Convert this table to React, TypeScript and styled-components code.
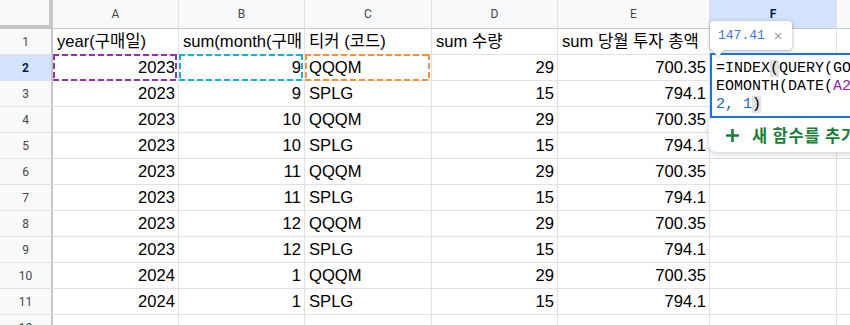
import * as React from 'react';
import styled, { createGlobalStyle } from 'styled-components';

const GlobalStyle = createGlobalStyle`
  html, body {
    margin: 0;
    padding: 0;
    background: #fff;
    overflow: hidden;
  }
`;

// sheet geometry (row header + A..G), G runs off the right edge
const COLS = ['A', 'B', 'C', 'D', 'E', 'F', 'G'];
const COL_WIDTHS = '53px 126px 126px 127px 126px 152px 127px 126px';

const GRID_LINE = '#e1e1e1';
const HEAD_LINE = '#c4c7c5';
const SELECT_BG = '#d3e3fd';

type Row = [string, string, string, string, string];

const header: Row = ['year(구매일)', 'sum(month(구매일))', '티커 (코드)', 'sum 수량', 'sum 당월 투자 총액'];

const rows: Row[] = [
  ['2023', '9', 'QQQM', '29', '700.35'],
  ['2023', '9', 'SPLG', '15', '794.1'],
  ['2023', '10', 'QQQM', '29', '700.35'],
  ['2023', '10', 'SPLG', '15', '794.1'],
  ['2023', '11', 'QQQM', '29', '700.35'],
  ['2023', '11', 'SPLG', '15', '794.1'],
  ['2023', '12', 'QQQM', '29', '700.35'],
  ['2023', '12', 'SPLG', '15', '794.1'],
  ['2024', '1', 'QQQM', '29', '700.35'],
  ['2024', '1', 'SPLG', '15', '794.1'],
];

// colours of the ranges referenced by the formula in F2
const rangeColors: Record<number, string> = {
  0: '#9334a6',
  1: '#12b5cb',
  2: '#fa903e',
};

const Sheet = styled.div`
  position: relative;
  width: 850px;
  height: 325px;
  overflow: hidden;
`;

const Grid = styled.div`
  display: grid;
  width: max-content;
  grid-template-columns: ${COL_WIDTHS};
  grid-template-rows: 29px repeat(12, 26px);
  font-family: 'Liberation Sans', 'Noto Sans CJK KR', Arial, sans-serif;
`;

const Corner = styled.div`
  background: #f8f9fa;
  border-right: 4px solid #c7c7c7;
  border-bottom: 4px solid #c7c7c7;
  box-sizing: border-box;
`;

const ColHeader = styled.div<{ $active?: boolean }>`
  display: flex;
  align-items: center;
  justify-content: center;
  box-sizing: border-box;
  background: ${(p) => (p.$active ? SELECT_BG : '#f8f9fa')};
  border-right: 1px solid ${GRID_LINE};
  border-bottom: 1px solid ${HEAD_LINE};
  font-family: Roboto, 'Liberation Sans', sans-serif;
  font-size: 12px;
  font-weight: ${(p) => (p.$active ? 700 : 400)};
  color: ${(p) => (p.$active ? '#041e49' : '#444746')};
  padding-bottom: 1px;
`;

const RowHeader = styled.div<{ $active?: boolean }>`
  display: flex;
  align-items: center;
  justify-content: center;
  box-sizing: border-box;
  background: ${(p) => (p.$active ? SELECT_BG : '#f8f9fa')};
  border-right: 2px solid ${HEAD_LINE};
  border-bottom: 1px solid ${GRID_LINE};
  font-family: Roboto, 'Liberation Sans', sans-serif;
  font-size: 12px;
  font-weight: ${(p) => (p.$active ? 700 : 400)};
  color: ${(p) => (p.$active ? '#041e49' : '#444746')};
  padding-top: 1px;
`;

const dashes = (c: string, dir: string) =>
  `repeating-linear-gradient(${dir}, ${c} 0 6px, transparent 6px 9px)`;

const Cell = styled.div<{ $align?: 'left' | 'right'; $range?: string }>`
  position: relative;
  display: flex;
  align-items: flex-end;
  justify-content: ${(p) => (p.$align === 'right' ? 'flex-end' : 'flex-start')};
  box-sizing: border-box;
  padding: 0 3px 2px 4px;
  border-right: 1px solid ${GRID_LINE};
  border-bottom: 1px solid ${GRID_LINE};
  font-size: 16.6px;
  line-height: 21px;
  color: #000;
  white-space: nowrap;
  overflow: ${(p) => (p.$range ? 'visible' : 'hidden')};

  ${(p) =>
    p.$range &&
    `
    &::after {
      content: '';
      position: absolute;
      top: -1px;
      bottom: -1px;
      left: 0;
      right: 1px;
      pointer-events: none;
      background:
        ${dashes(p.$range, '90deg')} top left / 100% 2px no-repeat,
        ${dashes(p.$range, '90deg')} bottom left / 100% 2px no-repeat,
        ${dashes(p.$range, '180deg')} top left / 2px 100% no-repeat,
        ${dashes(p.$range, '180deg')} top right / 2px 100% no-repeat;
    }
  `}
`;

const Clip = styled.span`
  overflow: hidden;
  display: block;
  max-width: 100%;
`;

// tooltip with the computed value above the editor
const ValueTip = styled.div`
  position: absolute;
  left: 710px;
  top: 21px;
  width: 82px;
  height: 29px;
  box-sizing: border-box;
  display: flex;
  align-items: center;
  gap: 9px;
  padding-left: 8px;
  background: #fff;
  border-radius: 4px;
  box-shadow: 0 1px 3px rgba(60, 64, 67, 0.3), 0 1px 4px 1px rgba(60, 64, 67, 0.12);
  z-index: 3;

  &::after {
    content: '';
    position: absolute;
    left: 2px;
    bottom: -7px;
    border-left: 6px solid transparent;
    border-right: 6px solid transparent;
    border-top: 7px solid #fff;
    filter: drop-shadow(0 1px 1px rgba(60, 64, 67, 0.25));
  }
`;

const TipValue = styled.span`
  font-family: 'Liberation Mono', 'DejaVu Sans Mono', monospace;
  font-size: 13px;
  color: #3b78e7;
`;

const TipClose = styled.span`
  font-family: 'Liberation Sans', Arial, sans-serif;
  font-size: 15px;
  color: #9aa0a6;
`;

const Editor = styled.div`
  position: absolute;
  left: 710px;
  top: 53px;
  width: 160px;
  height: 65px;
  box-sizing: border-box;
  padding: 5px 4px 0 4px;
  background: #fff;
  border: 2px solid #1a73e8;
  font-family: 'Liberation Mono', 'DejaVu Sans Mono', monospace;
  font-size: 15px;
  line-height: 18px;
  color: #000;
  white-space: nowrap;
  z-index: 2;
`;

const Tok = styled.span<{ $c?: string; $match?: boolean }>`
  color: ${(p) => p.$c || '#000'};
  background: ${(p) => (p.$match ? '#e1e1e1' : 'transparent')};
`;

const FnMenu = styled.div`
  position: absolute;
  left: 709px;
  top: 118px;
  width: 180px;
  height: 34px;
  box-sizing: border-box;
  display: flex;
  align-items: center;
  gap: 12px;
  padding-left: 16px;
  background: #fff;
  border-radius: 0 0 8px 8px;
  box-shadow: 0 2px 6px 1px rgba(60, 64, 67, 0.2);
  font-family: 'Noto Sans CJK KR', 'Liberation Sans', sans-serif;
  font-size: 16.5px;
  letter-spacing: 0.8px;
  font-weight: 700;
  color: #188038;
  white-space: nowrap;
  z-index: 1;
`;

const Plus = () => (
  <svg width="15" height="15" viewBox="0 0 15 15">
    <path d="M7.5 1v13M1 7.5h13" stroke="#188038" strokeWidth="2.6" />
  </svg>
);

export default function App() {
  return (
    <Sheet>
      <GlobalStyle />
      <Grid>
        <Corner />
        {COLS.map((c) => (
          <ColHeader key={c} $active={c === 'F'}>
            {c}
          </ColHeader>
        ))}

        <RowHeader>1</RowHeader>
        {header.map((h, i) => (
          <Cell key={i}>
            <Clip>{h}</Clip>
          </Cell>
        ))}
        <Cell />
        <Cell />

        {rows.map((r, ri) => (
          <React.Fragment key={ri}>
            <RowHeader $active={ri === 0}>{ri + 2}</RowHeader>
            {r.map((v, ci) => (
              <Cell
                key={ci}
                $align={ci === 2 ? 'left' : 'right'}
                $range={ri === 0 ? rangeColors[ci] : undefined}
              >
                {v}
              </Cell>
            ))}
            <Cell />
            <Cell />
          </React.Fragment>
        ))}

        <RowHeader>12</RowHeader>
        {COLS.map((c) => (
          <Cell key={c} />
        ))}
      </Grid>

      <ValueTip>
        <TipValue>147.41</TipValue>
        <TipClose>×</TipClose>
      </ValueTip>

      <Editor>
        <div>
          <Tok>=INDEX</Tok>
          <Tok $match>(</Tok>
          <Tok>QUERY(GOOGLEFINANCE(</Tok>
        </div>
        <div>
          <Tok>EOMONTH(DATE(</Tok>
          <Tok $c="#8e24aa">A2</Tok>
        </div>
        <div>
          <Tok $c="#1967d2">2, 1</Tok>
          <Tok $match>)</Tok>
        </div>
      </Editor>

      <FnMenu>
        <Plus />
        <span>새 함수를 추가</span>
      </FnMenu>
    </Sheet>
  );
}
